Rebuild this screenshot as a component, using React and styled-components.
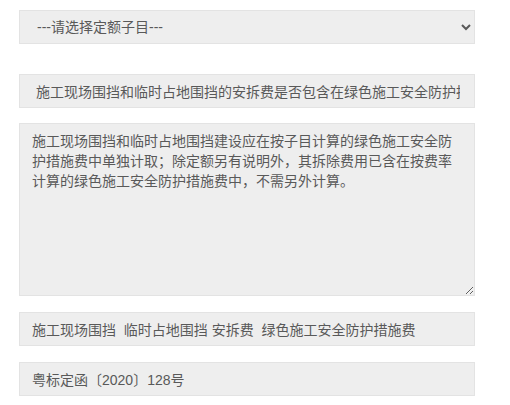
import React from "react";
import styled, { createGlobalStyle } from "styled-components";

const GlobalStyle = createGlobalStyle`
  html, body {
    margin: 0;
    padding: 0;
    background: #fff;
  }
  body {
    font-family: "Liberation Sans", "Noto Sans CJK SC", sans-serif;
  }
`;

const Form = styled.div`
  display: flex;
  flex-direction: column;
  width: 456px;
  padding: 10px 0 0 19px;
`;

const fieldBase = `
  box-sizing: border-box;
  width: 100%;
  border: 1px solid #e3e3e3;
  background: #eeeeee;
  color: #595959;
  font-family: "Liberation Sans", "Noto Sans CJK SC", sans-serif;
  font-size: 14px;
  outline: none;
  margin: 0;
`;

const Select = styled.select`
  ${fieldBase}
  height: 34px;
  padding: 0 10px 0 13px;
  border-radius: 0;
`;

const Input = styled.input`
  ${fieldBase}
  height: 34px;
  margin-top: ${(p) => p.$gap || 15}px;
  padding: 0 14px 0 16px;
`;

const TextArea = styled.textarea`
  ${fieldBase}
  height: 173px;
  margin-top: 15px;
  padding: 7px 12px;
  line-height: 20px;
  resize: vertical;
`;

const Line = styled.input`
  ${fieldBase}
  height: 34px;
  margin-top: 16px;
  padding: 0 12px;
`;

const question =
  "施工现场围挡和临时占地围挡的安拆费是否包含在绿色施工安全防护措施费中？";
const answer =
  "施工现场围挡和临时占地围挡建设应在按子目计算的绿色施工安全防护措施费中单独计取；除定额另有说明外，其拆除费用已含在按费率计算的绿色施工安全防护措施费中，不需另外计算。";

export default function App() {
  return (
    <>
      <GlobalStyle />
      <Form>
        <Select defaultValue="">
          <option value="">---请选择定额子目---</option>
        </Select>
        <Input $gap={30} readOnly value={question} />
        <TextArea readOnly value={answer} />
        <Line
          readOnly
          value="施工现场围挡  临时占地围挡 安拆费  绿色施工安全防护措施费"
        />
        <Line readOnly value="粤标定函〔2020〕128号" />
      </Form>
    </>
  );
}
